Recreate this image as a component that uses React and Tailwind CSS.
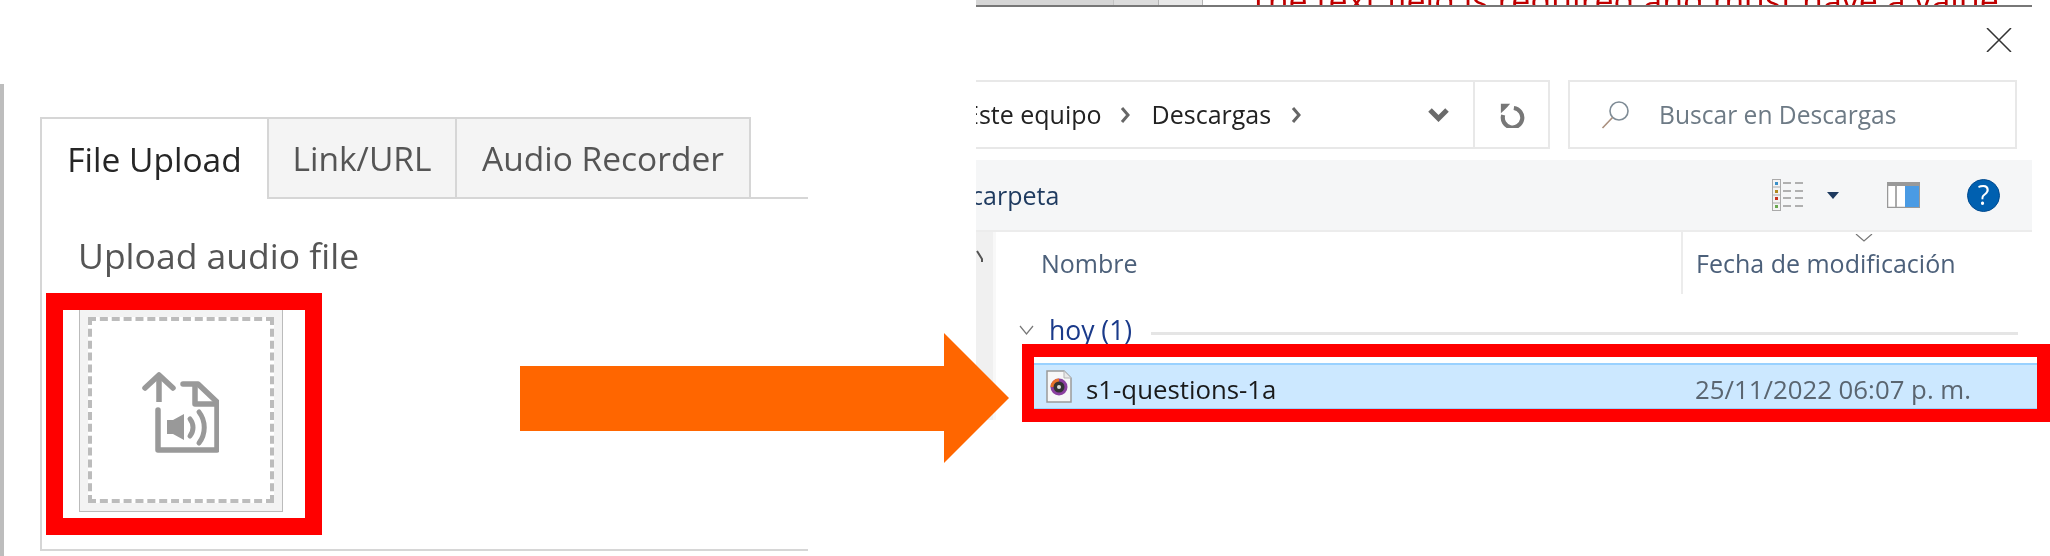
import React from "react";

const openSans = { fontFamily: '"Open Sans", sans-serif' };

function UploadIcon() {
  return (
    <svg width="78" height="84" viewBox="0 0 78 84" fill="none" stroke="#999" strokeWidth="5.5" strokeLinejoin="round">
      <path d="M18 4v28" />
      <path d="M4 18L18 5l14 13" strokeLinecap="round" />
      <path d="M17 40v40h59V32L57 14H42" strokeLinecap="round" />
      <path d="M54 14v20h22" />
      <path d="M26 50h6l11-6v26l-11-6h-6z" fill="#999" stroke="none" />
      <path d="M49 49c4 5 4 12 0 17" strokeWidth="5" strokeLinecap="round" />
      <path d="M58 42c7 9 7 22 0 31" strokeWidth="5" strokeLinecap="round" />
    </svg>
  );
}

function ViewIcon() {
  return (
    <svg width="32" height="32" viewBox="0 0 32 32" fill="none">
      <rect x="0.5" y="0.5" width="8" height="31" fill="#f4f4f4" stroke="#aaa" />
      <path d="M0 8h9M0 16h9M0 24h9" stroke="#aaa" />
      <rect x="3" y="3" width="3" height="3" fill="#3a8fc8" />
      <rect x="3" y="11" width="3" height="3" fill="#b08a20" />
      <rect x="3" y="18" width="3" height="3" fill="#c8301e" />
      <rect x="3" y="26" width="3" height="3" fill="#6aa84f" />
      <path d="M11 4h8M23 4h8M11 12h8M23 12h8M11 19h8M23 19h8M11 27h8M23 27h8" stroke="#999" strokeWidth="1.5" />
    </svg>
  );
}

function PaneIcon() {
  return (
    <svg width="33" height="26" viewBox="0 0 33 26">
      <rect x="0.5" y="0.5" width="32" height="25" fill="#fff" stroke="#999" strokeWidth="1.5" />
      <rect x="1" y="1" width="31" height="3" fill="#999" />
      <rect x="8" y="4" width="2" height="21" fill="#aaa" />
      <rect x="18" y="4" width="14" height="21" fill="#4a9be4" />
    </svg>
  );
}

function RefreshIcon() {
  return (
    <svg width="26" height="26" viewBox="0 0 28 28" fill="none" stroke="#777" strokeWidth="4.5">
      <path d="M16 6.500A10.500 10.500 0 1 1 4.500 14" />
      <path d="M2 2h10L9 5.500 5.500 9 2 12z" fill="#777" stroke="none" />
    </svg>
  );
}

function SearchIcon() {
  return (
    <svg width="28" height="28" viewBox="0 0 28 28" fill="none" strokeWidth="1.6">
      <circle cx="18" cy="10" r="9" stroke="#7f8c96" />
      <path d="M11.500 16.500L1.500 27" stroke="#a98f7e" />
    </svg>
  );
}

function AudioFileIcon() {
  return (
    <svg width="26" height="33" viewBox="0 0 26 33">
      <path d="M1 1h17l7 7v24H1z" fill="#f7f7f7" stroke="#9a9a9a" strokeWidth="1.5" />
      <path d="M18 1v7h7" fill="#e8e8e8" stroke="#b5b5b5" />
      <circle cx="13" cy="17" r="8.500" fill="#8a3fa0" />
      <path d="M13 8.500a8.500 8.500 0 0 0-8.500 8.500H13z" fill="#e8702a" />
      <circle cx="13" cy="17" r="5.500" fill="#333" />
      <circle cx="13" cy="17" r="2" fill="#ddd" />
    </svg>
  );
}

function UploadPanel() {
  return (
    <div className="h-[556px] w-[976px] pt-[84px]" style={openSans}>
      <div className="h-full border-l-[4px] border-[#bdbdbd] pl-[36px] pt-[33px]">
        <div className="h-[434px] w-[768px] border-b-2 border-l-2 border-[#d6d6d6]">
          <div className="flex h-[82px] border-b-2 border-[#d6d6d6] text-[33.500px] font-medium">
            <div className="-mb-[2px] flex w-[225px] items-center justify-center border-t-2 border-[#d6d6d6] bg-white text-[#262626]">
              File Upload
            </div>
            <div className="flex w-[190px] items-center justify-center border-x-2 border-t-2 border-[#d6d6d6] bg-[#f4f4f4] text-[#555555]">
              Link/URL
            </div>
            <div className="flex w-[294px] items-center justify-center border-r-2 border-t-2 border-[#d6d6d6] bg-[#f4f4f4] text-[#555555]">
              Audio Recorder
            </div>
          </div>
          <div className="pl-[36px] pt-[32px]">
            <div className="text-[35.500px] font-medium leading-[48px] text-[#555555]">Upload audio file</div>
            <div className="relative ml-[1px] mt-[30px] w-[204px]">
              <div className="h-[203px] border-x border-b border-[#bbbbbb] bg-[#f3f3f3] p-[8px]">
                <div className="flex h-full items-center justify-center border-[4px] border-dashed border-[#bcbcbc] bg-white pr-[3px] pt-[4px]">
                  <UploadIcon />
                </div>
              </div>
              <div className="absolute -bottom-[23px] -left-[33px] -right-[39px] -top-[16px] border-[17px] border-[#ff0000]" />
            </div>
          </div>
        </div>
      </div>
    </div>
  );
}

function ExplorerPanel() {
  return (
    <div className="h-[556px] w-[1056px] overflow-hidden" style={openSans}>
      <div className="flex h-[7px] items-end overflow-hidden border-b-2 border-[#777777] text-[34px] leading-[40px]">
        <div className="h-full w-[137px] bg-[#d6d6d6]" />
        <div className="h-full w-[45px] border-l border-[#c4c4c4] bg-[#dcdcdc]" />
        <div className="h-full w-[45px] border-x border-[#b4b4b4] bg-[#e9e9e9]" />
        <div className="ml-[46px] h-[40px] shrink-0 translate-y-[15px] whitespace-nowrap text-[#c00000]">
          The text field is required and must have a value
        </div>
      </div>

      <div className="flex h-[73px] justify-end pr-[20px] pt-[21px]">
        <svg width="26" height="24" viewBox="0 0 26 24" stroke="#333" strokeWidth="1.5">
          <path d="M1 0l24 24M25 0L1 24" />
        </svg>
      </div>

      <div className="flex h-[69px]">
        <div className="flex w-[574px] border-y-2 border-r-2 border-[#e8e8e8]">
          <div className="flex flex-1 items-center overflow-hidden text-[25px] text-[#222222]">
            <span className="-ml-[11px] pt-[1px]">Este equipo</span>
            <svg className="ml-[18px]" width="10" height="18" viewBox="0 0 10 18" fill="none" stroke="#666" strokeWidth="3">
              <path d="M2 2l6 7-6 7" />
            </svg>
            <span className="ml-[22px] pt-[1px]">Descargas</span>
            <svg className="ml-[20px]" width="10" height="18" viewBox="0 0 10 18" fill="none" stroke="#666" strokeWidth="3">
              <path d="M2 2l6 7-6 7" />
            </svg>
            <svg className="ml-[127px]" width="21" height="14" viewBox="0 0 21 14" fill="none" stroke="#6a6a6a" strokeWidth="5">
              <path d="M2 2l8.500 8.500L19 2" />
            </svg>
          </div>
          <div className="flex w-[75px] items-center justify-center border-l-2 border-[#e8e8e8]">
            <RefreshIcon />
          </div>
        </div>
        <div className="ml-[18px] flex w-[449px] items-center border-2 border-[#e8e8e8] pl-[31px] text-[24.600px] text-[#6d7a85]">
          <SearchIcon />
          <span className="ml-[30px] pt-[2px]">Buscar en Descargas</span>
        </div>
      </div>

      <div className="mt-[11px] flex h-[72px] items-center border-b-2 border-[#ececec] bg-[#f5f6f7] pr-[32px]">
        <span className="-ml-[86px] pt-[2px] text-[25px] text-[#1e3a5f]">Nueva carpeta</span>
        <div className="ml-auto flex items-center">
          <ViewIcon />
          <div className="ml-[23px] h-0 w-0 border-x-[6px] border-t-[7px] border-x-transparent border-t-[#1e3a5f]" />
          <div className="ml-[48px]">
            <PaneIcon />
          </div>
          <div className="ml-[47px] flex h-[33px] w-[33px] items-center justify-center rounded-full border border-[#004a8f] bg-[#0060b0] text-[27px] text-white">
            ?
          </div>
        </div>
      </div>

      <div className="flex">
        <div className="flex h-[188px] w-[20px] flex-col border-r-[3px] border-[#f8f8f8] bg-[#f0f0f0] pt-[18px]">
          <svg width="7" height="12" viewBox="0 0 7 12" fill="none" stroke="#555" strokeWidth="2">
            <path d="M1 1l5 8v3" />
          </svg>
        </div>
        <div className="flex-1">
          <div className="flex h-[62px] text-[25px] text-[#4c607a]">
            <div className="flex w-[685px] items-center pl-[45px] pt-[2px]">Nombre</div>
            <div className="relative flex flex-1 items-center border-l-2 border-[#ececec] pl-[13px] pt-[2px]">
              Fecha de modificación
              <svg className="absolute left-[172px] top-[2px]" width="18" height="8" viewBox="0 0 18 8" fill="none" stroke="#777" strokeWidth="1.2">
                <path d="M1 0l8 7 8-7" />
              </svg>
            </div>
          </div>

          <div className="flex h-[78px] items-center pl-[23px] pr-[14px] text-[26.500px] text-[#1a3a8a]">
            <svg className="mb-[6px]" width="15" height="11" viewBox="0 0 15 11" fill="none" stroke="#777" strokeWidth="1.2">
              <path d="M1 1l6.500 8 6.500-8" />
            </svg>
            <span className="mb-[4px] ml-[15px]">hoy (1)</span>
            <div className="ml-[19px] h-[3px] flex-1 bg-[#e5e5e5]" />
          </div>
        </div>
      </div>
    </div>
  );
}

export default function App() {
  return (
    <div className="relative flex h-[556px] w-[2050px] overflow-hidden bg-white blur-[0.5px]">
      <UploadPanel />
      <ExplorerPanel />
      {/* selected row sits over the panel with its red marker */}
      <div className="absolute bottom-[134px] left-[1022px] right-0 top-[344px] border-y-[13px] border-l-[12px] border-r-[13px] border-[#ff0000] bg-white pt-[6px]" style={openSans}>
        <div className="flex h-full items-center border-t-2 border-b border-[#99d1ff] bg-[#cce8ff] pl-[12px] text-[25.800px]">
          <AudioFileIcon />
          <span className="ml-[14px] w-[609px] pt-[5px] text-[#1a1a1a]">s1-questions-1a</span>
          <span className="whitespace-nowrap pt-[5px] text-[#5a6570]">25/11/2022 06:07 p. m.</span>
        </div>
      </div>
      <svg className="absolute left-[520px] top-[333px]" width="490" height="130" viewBox="0 0 490 130">
        <path d="M0 33h424V0l65 65-65 65V98H0z" fill="#ff6600" />
      </svg>
    </div>
  );
}
